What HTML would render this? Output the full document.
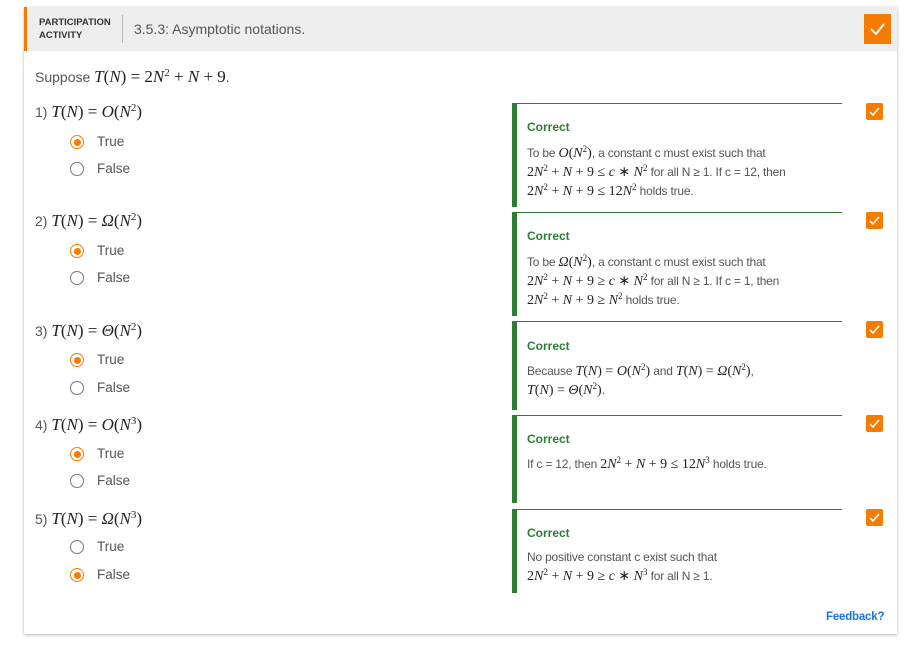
<!DOCTYPE html>
<html><head><meta charset="utf-8"><style>
body{margin:0;width:924px;height:653px;background:#fff;font-family:"Liberation Sans",sans-serif;color:#555;position:relative;overflow:hidden}
sup{line-height:0;vertical-align:0;position:relative;top:-0.55em}
.card{position:absolute;left:24px;top:7px;width:873px;height:627px;background:#fff;box-shadow:0 1px 3px rgba(0,0,0,.3)}
.hdr{position:absolute;left:0;top:0;width:873px;height:44px;background:#eeeeee;border-left:3px solid #f57c00;box-sizing:border-box}
.pa{position:absolute;left:12px;top:9px;font-size:9.5px;font-weight:bold;color:#333;line-height:13px}
.sep{position:absolute;left:95px;top:8px;width:1px;height:28px;background:#bbb}
.ttl{position:absolute;left:107px;top:14px;font-size:14px;color:#555}
.hchk{position:absolute;left:837px;top:7px;width:27px;height:30px;background:#f57c00}
.a{position:absolute;white-space:nowrap}
.m{font-family:"Liberation Serif",serif;font-size:17px;color:#222}
.m i{font-style:italic}
.q{font-size:14px;color:#555}
.opt{font-size:13.5px;color:#555}
.r{position:absolute;width:12px;height:12px;border:1.5px solid #777;border-radius:50%}
.r.on{border-color:#f57c00}
.r.on:after{content:"";position:absolute;left:2.5px;top:2.5px;width:7px;height:7px;border-radius:50%;background:#f57c00}
.fb{position:absolute;left:512px;width:330px;border-top:1.5px solid #2e7d32;border-left:5px solid #2e7d32;box-sizing:border-box}
.fb .c{position:absolute;left:10px;font-weight:bold;color:#2e7d32;font-size:12px}
.fb .t{position:absolute;left:10px;font-size:12px;color:#555;line-height:19px;white-space:nowrap;letter-spacing:-0.2px}
.fb .t .m{font-size:14px;letter-spacing:0}
.ck{position:absolute;left:866px;width:17px;height:17px;background:#f57c00;border-radius:2px}
.fbk{position:absolute;left:826px;top:611px;font-size:11.5px;font-weight:bold;color:#1a73e8;letter-spacing:-0.2px}
</style></head><body>
<div class="card">
<div class="hdr"><div class="pa">PARTICIPATION<br>ACTIVITY</div><div class="sep"></div><div class="ttl">3.5.3: Asymptotic notations.</div>
<div class="hchk"><svg width="27" height="30"><path d="M7 15 L12 20 L20 10" stroke="#fff" stroke-width="2" fill="none"/></svg></div></div>
</div>
<div class="a q" style="left:35px;top:67px">Suppose <span class="m"><i>T</i>(<i>N</i>) = 2<i>N</i><sup style="font-size:11px">2</sup> + <i>N</i> + 9</span>.</div>

<div class="a q" style="left:35px;top:102px">1) <span class="m"><i>T</i>(<i>N</i>) = <i>O</i>(<i>N</i><sup style="font-size:11px">2</sup>)</span></div>
<div class="r on" style="left:70px;top:135px"></div><div class="a opt" style="left:97px;top:134px">True</div>
<div class="r" style="left:70px;top:162px"></div><div class="a opt" style="left:97px;top:161px">False</div>

<div class="a q" style="left:35px;top:211px">2) <span class="m"><i>T</i>(<i>N</i>) = <i>Ω</i>(<i>N</i><sup style="font-size:11px">2</sup>)</span></div>
<div class="r on" style="left:70px;top:244px"></div><div class="a opt" style="left:97px;top:243px">True</div>
<div class="r" style="left:70px;top:271px"></div><div class="a opt" style="left:97px;top:270px">False</div>

<div class="a q" style="left:35px;top:321px">3) <span class="m"><i>T</i>(<i>N</i>) = <i>Θ</i>(<i>N</i><sup style="font-size:11px">2</sup>)</span></div>
<div class="r on" style="left:70px;top:353px"></div><div class="a opt" style="left:97px;top:352px">True</div>
<div class="r" style="left:70px;top:381px"></div><div class="a opt" style="left:97px;top:380px">False</div>

<div class="a q" style="left:35px;top:415px">4) <span class="m"><i>T</i>(<i>N</i>) = <i>O</i>(<i>N</i><sup style="font-size:11px">3</sup>)</span></div>
<div class="r on" style="left:70px;top:447px"></div><div class="a opt" style="left:97px;top:446px">True</div>
<div class="r" style="left:70px;top:474px"></div><div class="a opt" style="left:97px;top:473px">False</div>

<div class="a q" style="left:35px;top:509px">5) <span class="m"><i>T</i>(<i>N</i>) = <i>Ω</i>(<i>N</i><sup style="font-size:11px">3</sup>)</span></div>
<div class="r" style="left:70px;top:540px"></div><div class="a opt" style="left:97px;top:539px">True</div>
<div class="r on" style="left:70px;top:568px"></div><div class="a opt" style="left:97px;top:567px">False</div>

<div class="fb" style="top:103px;height:104px"><div class="c" style="top:16px">Correct</div>
<div class="t" style="top:40px">To be <span class="m"><i>O</i>(<i>N</i><sup style="font-size:9px">2</sup>)</span>, a constant c must exist such that<br><span class="m">2<i>N</i><sup style="font-size:9px">2</sup> + <i>N</i> + 9 ≤ <i>c</i> ∗ <i>N</i><sup style="font-size:9px">2</sup></span> for all N ≥ 1. If c = 12, then<br><span class="m">2<i>N</i><sup style="font-size:9px">2</sup> + <i>N</i> + 9 ≤ 12<i>N</i><sup style="font-size:9px">2</sup></span> holds true.</div></div>
<div class="fb" style="top:212px;height:104px"><div class="c" style="top:16px">Correct</div>
<div class="t" style="top:40px">To be <span class="m"><i>Ω</i>(<i>N</i><sup style="font-size:9px">2</sup>)</span>, a constant c must exist such that<br><span class="m">2<i>N</i><sup style="font-size:9px">2</sup> + <i>N</i> + 9 ≥ <i>c</i> ∗ <i>N</i><sup style="font-size:9px">2</sup></span> for all N ≥ 1. If c = 1, then<br><span class="m">2<i>N</i><sup style="font-size:9px">2</sup> + <i>N</i> + 9 ≥ <i>N</i><sup style="font-size:9px">2</sup></span> holds true.</div></div>
<div class="fb" style="top:321px;height:89px"><div class="c" style="top:17px">Correct</div>
<div class="t" style="top:40px">Because <span class="m"><i>T</i>(<i>N</i>) = <i>O</i>(<i>N</i><sup style="font-size:9px">2</sup>)</span> and <span class="m"><i>T</i>(<i>N</i>) = <i>Ω</i>(<i>N</i><sup style="font-size:9px">2</sup>)</span>,<br><span class="m"><i>T</i>(<i>N</i>) = <i>Θ</i>(<i>N</i><sup style="font-size:9px">2</sup>)</span>.</div></div>
<div class="fb" style="top:415px;height:88px"><div class="c" style="top:16px">Correct</div>
<div class="t" style="top:39px">If c = 12, then <span class="m">2<i>N</i><sup style="font-size:9px">2</sup> + <i>N</i> + 9 ≤ 12<i>N</i><sup style="font-size:9px">3</sup></span> holds true.</div></div>
<div class="fb" style="top:509px;height:84px"><div class="c" style="top:16px">Correct</div>
<div class="t" style="top:38px">No positive constant c exist such that<br><span class="m">2<i>N</i><sup style="font-size:9px">2</sup> + <i>N</i> + 9 ≥ <i>c</i> ∗ <i>N</i><sup style="font-size:9px">3</sup></span> for all N ≥ 1.</div></div>

<div class="ck" style="top:103px"><svg width="17" height="17"><path d="M4 9 L7 12 L13 5" stroke="#fff" stroke-width="1.5" fill="none"/></svg></div>
<div class="ck" style="top:212px"><svg width="17" height="17"><path d="M4 9 L7 12 L13 5" stroke="#fff" stroke-width="1.5" fill="none"/></svg></div>
<div class="ck" style="top:321px"><svg width="17" height="17"><path d="M4 9 L7 12 L13 5" stroke="#fff" stroke-width="1.5" fill="none"/></svg></div>
<div class="ck" style="top:415px"><svg width="17" height="17"><path d="M4 9 L7 12 L13 5" stroke="#fff" stroke-width="1.5" fill="none"/></svg></div>
<div class="ck" style="top:509px"><svg width="17" height="17"><path d="M4 9 L7 12 L13 5" stroke="#fff" stroke-width="1.5" fill="none"/></svg></div>
<div class="fbk">Feedback?</div>
</body></html>
